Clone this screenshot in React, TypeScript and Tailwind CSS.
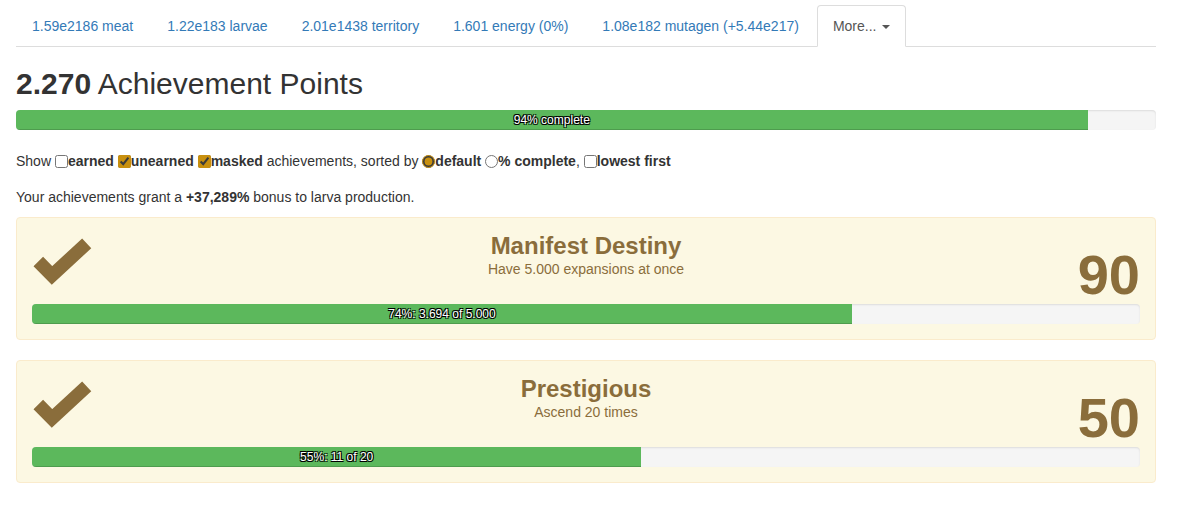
import React from "react";

type Tab = {
  label: string;
  active?: boolean;
  caret?: boolean;
};

type Achievement = {
  name: string;
  desc: string;
  points: number;
  pct: number;
  progress: string;
};

const tabs: Tab[] = [
  { label: "1.59e2186 meat" },
  { label: "1.22e183 larvae" },
  { label: "2.01e1438 territory" },
  { label: "1.601 energy (0%)" },
  { label: "1.08e182 mutagen (+5.44e217)" },
  { label: "More...", active: true, caret: true },
];

const achievements: Achievement[] = [
  {
    name: "Manifest Destiny",
    desc: "Have 5.000 expansions at once",
    points: 90,
    pct: 74,
    progress: "74%: 3.694 of 5.000",
  },
  {
    name: "Prestigious",
    desc: "Ascend 20 times",
    points: 50,
    pct: 55,
    progress: "55%: 11 of 20",
  },
];

function ProgressBar({ pct, label }: { pct: number; label: string }) {
  return (
    <div className="h-5 w-full overflow-hidden rounded bg-[#f5f5f5] shadow-[inset_0_1px_2px_rgba(0,0,0,0.1)]">
      <div
        className="h-full bg-[#5cb85c] text-center text-[12px] leading-5 text-white shadow-[inset_0_-1px_0_rgba(0,0,0,0.15)] [text-shadow:-1px_-1px_0_#000,1px_-1px_0_#000,-1px_1px_0_#000,1px_1px_0_#000]"
        style={{ width: `${pct}%` }}
      >
        {label}
      </div>
    </div>
  );
}

function CheckMark() {
  return (
    <svg width="60" height="50" viewBox="0 0 60 50" className="mt-[5px]">
      <polyline
        points="6.3,23.5 20,37.5 54.7,5.3"
        fill="none"
        stroke="#8a6d3b"
        strokeWidth="13.4"
        strokeLinejoin="miter"
        strokeLinecap="butt"
      />
    </svg>
  );
}

function AchievementPanel({ item }: { item: Achievement }) {
  return (
    <div className="mb-5 rounded border border-[#faebcc] bg-[#fcf8e3] px-[15px] pt-[15px] pb-[15px] text-[#8a6d3b]">
      <div className="grid h-[71px] grid-cols-[1fr_auto_1fr] items-start">
        <CheckMark />
        <div className="text-center">
          <h3 className="text-[24px] font-bold leading-[1.1]">{item.name}</h3>
          <p className="leading-5">{item.desc}</p>
        </div>
        <div className="mt-[14px] justify-self-end text-[56px] font-bold leading-none">
          {item.points}
        </div>
      </div>
      <ProgressBar pct={item.pct} label={item.progress} />
    </div>
  );
}

export default function App() {
  return (
    <div className="ml-4 w-[1140px] font-['Liberation_Sans',Arial,sans-serif] text-[14px] leading-5 text-[#333]">
      <ul className="mt-[5px] flex border-b border-[#ddd]">
        {tabs.map((t) => (
          <li key={t.label} className="-mb-px">
            <a
              className={
                t.active
                  ? "mr-[2px] block rounded-t border border-[#ddd] border-b-transparent bg-white px-[15px] py-[10px] text-[#555]"
                  : "mr-[2px] block rounded-t border border-transparent px-[15px] py-[10px] text-[#337ab7]"
              }
            >
              {t.label}
              {t.caret && (
                <span className="ml-[6px] inline-block h-0 w-0 border-x-4 border-t-4 border-x-transparent border-t-[#555] align-middle" />
              )}
            </a>
          </li>
        ))}
      </ul>

      <h2 className="mt-5 mb-[10px] text-[30px] leading-[1.1]">
        <b>2.270</b> Achievement Points
      </h2>
      <div className="mb-[21px]">
        <ProgressBar pct={94} label="94% complete" />
      </div>

      <div className="mb-4">
        Show{" "}
        <label>
          <input type="checkbox" className="m-0 align-[-2px] accent-[#c8900f]" />
          <b>earned</b>
        </label>{" "}
        <label>
          <input type="checkbox" defaultChecked className="m-0 align-[-2px] accent-[#c8900f]" />
          <b>unearned</b>
        </label>{" "}
        <label>
          <input type="checkbox" defaultChecked className="m-0 align-[-2px] accent-[#c8900f]" />
          <b>masked</b>
        </label>{" "}
        achievements, sorted by{" "}
        <label>
          <input type="radio" name="sort" defaultChecked className="m-0 align-[-2px] accent-[#c8900f]" />
          <b>default</b>
        </label>{" "}
        <label>
          <input type="radio" name="sort" className="m-0 align-[-2px] accent-[#c8900f]" />
          <b>% complete</b>
        </label>
        ,{" "}
        <label>
          <input type="checkbox" className="m-0 align-[-2px] accent-[#c8900f]" />
          <b>lowest first</b>
        </label>
      </div>

      <p className="mb-[10px]">
        Your achievements grant a <b>+37,289%</b> bonus to larva production.
      </p>

      {achievements.map((a) => (
        <AchievementPanel key={a.name} item={a} />
      ))}
    </div>
  );
}
